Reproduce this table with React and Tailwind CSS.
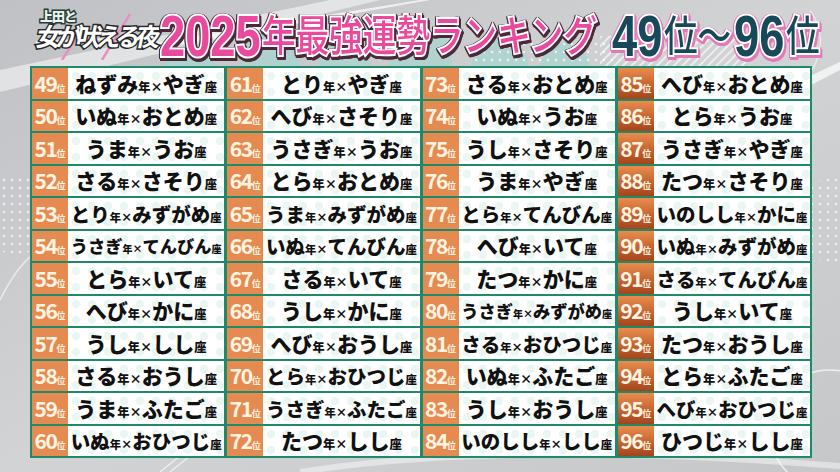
import React from 'react';

const rows = [
  ['ねずみ', 'やぎ'], ['いぬ', 'おとめ'], ['うま', 'うお'], ['さる', 'さそり'],
  ['とり', 'みずがめ'], ['うさぎ', 'てんびん'], ['とら', 'いて'], ['へび', 'かに'],
  ['うし', 'しし'], ['さる', 'おうし'], ['うま', 'ふたご'], ['いぬ', 'おひつじ'],
  ['とり', 'やぎ'], ['へび', 'さそり'], ['うさぎ', 'うお'], ['とら', 'おとめ'],
  ['うま', 'みずがめ'], ['いぬ', 'てんびん'], ['さる', 'いて'], ['うし', 'かに'],
  ['へび', 'おうし'], ['とら', 'おひつじ'], ['うさぎ', 'ふたご'], ['たつ', 'しし'],
  ['さる', 'おとめ'], ['いぬ', 'うお'], ['うし', 'さそり'], ['うま', 'やぎ'],
  ['とら', 'てんびん'], ['へび', 'いて'], ['たつ', 'かに'], ['うさぎ', 'みずがめ'],
  ['さる', 'おひつじ'], ['いぬ', 'ふたご'], ['うし', 'おうし'], ['いのしし', 'しし'],
  ['へび', 'おとめ'], ['とら', 'うお'], ['うさぎ', 'やぎ'], ['たつ', 'さそり'],
  ['いのしし', 'かに'], ['いぬ', 'みずがめ'], ['さる', 'てんびん'], ['うし', 'いて'],
  ['たつ', 'おうし'], ['とら', 'ふたご'], ['へび', 'おひつじ'], ['ひつじ', 'しし'],
];

const jp = { fontFamily: '"Noto Sans CJK JP", "Noto Sans", sans-serif' };
const latin = { fontFamily: '"Liberation Sans", Arial, sans-serif' };

function Backdrop() {
  return (
    <svg className="absolute inset-0" width="840" height="472" viewBox="0 0 840 472">
      <defs>
        <linearGradient id="bg" x1="0" y1="0" x2="1" y2="1">
          <stop offset="0" stopColor="#bfc1c4" />
          <stop offset="0.5" stopColor="#d2d3d5" />
          <stop offset="1" stopColor="#c6c7c9" />
        </linearGradient>
        <pattern id="dots" width="8" height="8" patternUnits="userSpaceOnUse">
          <circle cx="4" cy="4" r="1.2" fill="#ffffff" opacity="0.7" />
        </pattern>
        <pattern id="stripes" width="6" height="6" patternUnits="userSpaceOnUse" patternTransform="rotate(45)">
          <rect width="2" height="6" fill="#ffffff" opacity="0.6" />
        </pattern>
      </defs>
      <rect width="840" height="472" fill="url(#bg)" />
      <path d="M0 70 L330 0 L380 0 L0 92 Z" fill="#ffffff" opacity="0.5" />
      <path d="M150 44 L420 0 L430 0 L160 48 Z" fill="#ffffff" opacity="0.7" />
      <path d="M780 90 L840 62 L840 70 L790 96 Z" fill="#ffffff" opacity="0.7" />
      <g fill="#a9d6d0" opacity="0.75">
        <circle cx="190" cy="70" r="26" />
        <circle cx="270" cy="58" r="30" />
        <circle cx="345" cy="62" r="26" />
        <circle cx="420" cy="58" r="32" />
        <circle cx="500" cy="64" r="28" />
        <circle cx="565" cy="66" r="24" />
      </g>
      <rect x="470" y="40" width="150" height="30" fill="url(#dots)" />
      <rect x="600" y="36" width="150" height="30" fill="url(#stripes)" />
      <circle cx="16" cy="214" r="40" fill="url(#dots)" />
      <circle cx="840" cy="220" r="44" fill="url(#dots)" />
      <circle cx="830" cy="430" r="60" fill="none" stroke="#ffffff" strokeWidth="1.5" opacity="0.7" />
      <path d="M0 300 Q 20 260 40 250" fill="none" stroke="#ffffff" strokeWidth="1.5" opacity="0.6" />
      <path d="M160 472 L200 440" stroke="#ffffff" strokeWidth="1.2" opacity="0.7" />
      <path d="M170 472 L210 440" stroke="#ffffff" strokeWidth="1.2" opacity="0.7" />
      <path d="M300 472 Q 500 440 840 466" fill="none" stroke="#ffffff" strokeWidth="6" opacity="0.45" />
      <path d="M810 10 Q 830 40 812 70" fill="none" stroke="#ffffff" strokeWidth="1.2" opacity="0.6" />
    </svg>
  );
}

function Logo() {
  return (
    <div className="relative mt-[6px] h-[54px] w-[126px] shrink-0" style={jp}>
      <svg className="absolute inset-0" width="126" height="54" viewBox="0 0 126 54">
        <path d="M2 36 L122 31" stroke="#ffffff" strokeWidth="2" opacity="0.8" />
        <path d="M28 54 L50 20" stroke="#e98fc2" strokeWidth="2.5" />
        <path d="M68 54 L96 8" stroke="#e98fc2" strokeWidth="2.5" />
      </svg>
      <span className="absolute left-[6px] top-[3px] text-[13px] font-black leading-none tracking-[-1px] text-[#e7f6ef] [-webkit-text-stroke:3px_#2e3a36] [paint-order:stroke_fill]">
        上田と
      </span>
      <span className="absolute left-[3px] top-[17px] -skew-x-12 whitespace-nowrap text-[25px] font-bold leading-none tracking-[-5px] text-white [-webkit-text-stroke:3px_#262626] [paint-order:stroke_fill]">
        女が吠える夜
      </span>
    </div>
  );
}

const pink = 'text-[#ea4a9e] [-webkit-text-stroke:4px_#ffffff] [paint-order:stroke_fill] [filter:drop-shadow(1px_0_0_#4a2a38)_drop-shadow(-1px_0_0_#4a2a38)_drop-shadow(0_1px_0_#4a2a38)_drop-shadow(1px_2px_0_#4a2a38)]';
const teal = 'text-[#17495a] [-webkit-text-stroke:4px_#ffffff] [paint-order:stroke_fill] [filter:drop-shadow(1px_0_0_#e27ab8)_drop-shadow(-1px_0_0_#e27ab8)_drop-shadow(0_1px_0_#e27ab8)_drop-shadow(1px_2px_0_#e27ab8)]';

// tall narrow numerals of the caption
function Digits({ w, inner, children }) {
  return (
    <span className={`inline-block ${w} align-[-3px]`}>
      <span className={`inline-block ${inner} origin-left scale-x-[0.78] text-[58px] font-bold leading-none`} style={latin}>
        {children}
      </span>
    </span>
  );
}

// CJK glyphs squeezed horizontally
function Squeezed({ w, inner, children }) {
  return (
    <span className={`inline-block ${w} align-[2px]`}>
      <span className={`inline-block ${inner} origin-left scale-x-[0.8] font-medium leading-none`}>
        {children}
      </span>
    </span>
  );
}

function Title() {
  return (
    <div className={`h-[66px] w-[452px] shrink-0 whitespace-nowrap text-[42px] leading-[66px] ${pink}`} style={jp}>
      <Digits w="w-[102px]" inner="w-[130px]">2025</Digits>
      <Squeezed w="w-[336px]" inner="w-[420px]">年最強運勢ランキング</Squeezed>
    </div>
  );
}

function Range() {
  return (
    <div className={`h-[66px] shrink-0 whitespace-nowrap text-[42px] leading-[66px] ${teal}`} style={jp}>
      <Digits w="w-[52px]" inner="w-[66px]">49</Digits>
      <Squeezed w="w-[70px]" inner="w-[86px]">位～</Squeezed>
      <Digits w="w-[52px]" inner="w-[66px]">96</Digits>
      <Squeezed w="w-[34px]" inner="w-[42px]">位</Squeezed>
    </div>
  );
}

function Cell({ rank, animal, sign }) {
  const n = animal.length + sign.length;
  const big = Math.min(21, 150 / (n + 1.7));
  const small = big * 0.58;
  const late = rank >= 85;
  return (
    <div className="flex min-h-0">
      <div
        className={
          late
            ? 'flex w-[36px] shrink-0 items-center justify-center bg-gradient-to-b from-[#ea8c4d] to-[#a5441a]'
            : 'flex w-[36px] shrink-0 items-center justify-center bg-[#e58b51]'
        }
      >
        <div className="flex items-baseline text-[#fff4e2]" style={jp}>
          <span className="text-[21px] font-bold leading-none tracking-[-1.5px]">{rank}</span>
          <span className="text-[9px] font-bold leading-none">位</span>
        </div>
      </div>
      <div className="flex flex-1 items-center justify-center overflow-hidden whitespace-nowrap bg-white bg-[radial-gradient(circle,#eaf6f2_0_4px,transparent_4.5px)] bg-[length:16px_16px] font-black leading-none text-[#111111]" style={jp}>
        <span className="flex items-baseline">
          <span style={{ fontSize: big }}>{animal}</span>
          <span style={{ fontSize: small }}>年×</span>
          <span style={{ fontSize: big }}>{sign}</span>
          <span style={{ fontSize: small }}>座</span>
        </span>
      </div>
    </div>
  );
}

export default function App() {
  return (
    <div className="relative h-[472px] w-[840px] overflow-hidden">
      <Backdrop />
      <div className="relative">
        <header className="flex h-[66px] items-start pl-[34px]">
          <Logo />
          <Title />
          <Range />
        </header>
        <div className="ml-[30px] grid h-[392px] w-[782px] grid-flow-col grid-cols-4 grid-rows-[repeat(12,minmax(0,1fr))] gap-x-[3px] gap-y-[2px] bg-[#1f8a6a] p-[2px]">
          {rows.map(([animal, sign], i) => (
            <Cell key={i} rank={49 + i} animal={animal} sign={sign} />
          ))}
        </div>
      </div>
    </div>
  );
}
